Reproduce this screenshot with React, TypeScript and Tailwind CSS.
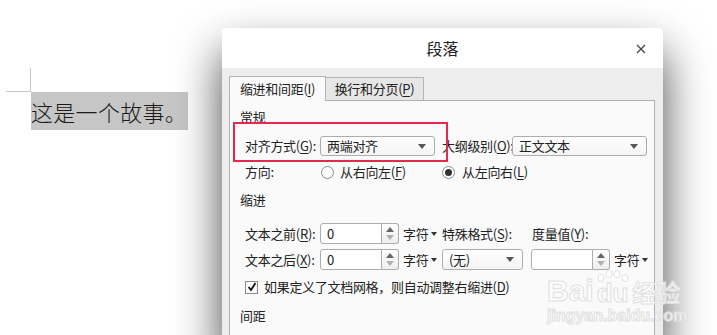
import React from 'react'

const ui = { fontFamily: '"Noto Sans CJK SC", "Noto Sans", sans-serif' }

function Key({ k }: { k: string }) {
  return <span className="underline underline-offset-2">{k}</span>
}

function Arrow() {
  return (
    <svg width="8" height="5" viewBox="0 0 8 5" className="shrink-0">
      <path d="M0 0 L8 0 L4 5 Z" fill="#555" />
    </svg>
  )
}

function Select({ w, text }: { w: string; text: string }) {
  return (
    <div
      className={`${w} shrink-0 h-full flex items-center justify-between pl-[6px] pr-[8px] border border-[#adadad] rounded-[3px] bg-gradient-to-b from-white to-[#f4f4f4] whitespace-nowrap`}
    >
      <span>{text}</span>
      <Arrow />
    </div>
  )
}

function NumberBox({ value }: { value: string }) {
  return (
    <div className="flex h-full shrink-0">
      <div className="w-[62px] h-full flex items-center pl-[6px] border border-[#adadad] rounded-l-[3px] bg-white">
        {value}
      </div>
      <div className="w-[17px] h-full flex flex-col items-center justify-between py-[3px] border border-l-0 border-[#adadad] rounded-r-[3px] bg-gradient-to-b from-white to-[#eeeeee]">
        <svg width="8" height="5" viewBox="0 0 8 5">
          <path d="M0 5 L8 5 L4 0 Z" fill="#666" />
        </svg>
        <svg width="8" height="5" viewBox="0 0 8 5">
          <path d="M0 0 L8 0 L4 5 Z" fill="#b0b0b0" />
        </svg>
      </div>
    </div>
  )
}

function Unit() {
  return (
    <div className="flex items-center gap-[3px] pl-[4px] whitespace-nowrap shrink-0">
      <span>字符</span>
      <svg width="6" height="4" viewBox="0 0 6 4">
        <path d="M0 0 L6 0 L3 4 Z" fill="#333" />
      </svg>
    </div>
  )
}

function Radio({ checked }: { checked?: boolean }) {
  return (
    <div className="w-[13px] h-[13px] rounded-full border border-[#8a8a8a] bg-white flex items-center justify-center shrink-0">
      {checked && <div className="w-[7px] h-[7px] rounded-full bg-[#333]" />}
    </div>
  )
}

export default function App() {
  return (
    <div className="relative w-[717px] h-[335px] overflow-hidden bg-white">
      {/* document text */}
      <div className="pt-[92px] pl-[31px]">
        <div className="relative w-[157px] h-[38px] bg-[#c6c6c6] flex items-center">
          <div className="absolute -left-[1px] -top-[24px] w-px h-[24px] bg-[#c8c8c8]" />
          <div className="absolute -left-[25px] -top-[1px] w-[24px] h-px bg-[#c8c8c8]" />
          <span
            className="text-[22px] text-[#1a1a1a] leading-none font-light tracking-[0.3px]"
            style={{ fontFamily: '"Noto Sans CJK SC", serif' }}
          >
            这是一个故事。
          </span>
        </div>
      </div>

      {/* paragraph dialog */}
      <div
        className="absolute left-[222px] top-[28px] w-[441px] h-[320px] flex flex-col bg-[#ededed] rounded-t-[4px] text-[13px] text-[#222] tracking-[-0.3px] whitespace-nowrap shadow-[0_24px_46px_rgba(0,0,0,0.72)]"
        style={ui}
      >
        <div className="h-[40px] bg-white rounded-t-[4px] relative flex items-center justify-center">
          <span className="text-[16px] text-[#222] tracking-normal">段落</span>
          <svg width="10" height="10" viewBox="0 0 10 10" className="absolute right-[17px] top-[16px]">
            <path d="M1 1 L9 9 M9 1 L1 9" stroke="#444" strokeWidth="1.2" />
          </svg>
        </div>

        <div className="flex-1 pl-[7px] pr-[8px] pt-[7px] flex flex-col">
          <div className="flex items-end h-[25px]">
            <div className="w-[97px] h-[25px] border border-b-0 border-[#b4b4b4] bg-[#fafafa] flex items-center justify-center relative z-10 -mb-px pb-px">
              缩进和间距(<Key k="I" />)
            </div>
            <div className="w-[98px] h-[23px] border border-l-0 border-b-0 border-[#b4b4b4] bg-[#e6e6e6] flex items-center justify-center">
              换行和分页(<Key k="P" />)
            </div>
          </div>

          <div className="relative flex-1 border border-[#b0b0b0] bg-[#fafafa] px-[10px] pt-[7px]">
            <div className="absolute left-[3px] top-[21px] w-[215px] h-[40px] border-2 border-[#e2294f]" />

            <div className="h-[18px] flex items-center">常规</div>

            <div className="mt-[10px] h-[20px] flex items-center pl-[5px]">
              <div className="w-[75px] shrink-0">
                对齐方式(<Key k="G" />):
              </div>
              <Select w="w-[115px]" text="两端对齐" />
              <div className="ml-[7px] w-[70px] shrink-0">
                大纲级别(<Key k="O" />):
              </div>
              <Select w="w-[135px]" text="正文文本" />
            </div>

            <div className="mt-[7px] h-[18px] flex items-center pl-[5px]">
              <div className="w-[75px] shrink-0">方向:</div>
              <div className="w-[122px] shrink-0 flex items-center gap-[6px] pl-[1px]">
                <Radio />
                <span>
                  从右向左(<Key k="F" />)
                </span>
              </div>
              <div className="flex items-center gap-[7px]">
                <Radio checked />
                <span>
                  从左向右(<Key k="L" />)
                </span>
              </div>
            </div>

            <div className="mt-[10px] h-[18px] flex items-center">缩进</div>

            <div className="mt-[14px] h-[21px] flex items-center pl-[5px]">
              <div className="w-[75px] shrink-0">
                文本之前(<Key k="R" />):
              </div>
              <NumberBox value="0" />
              <div className="w-[43px] shrink-0">
                <Unit />
              </div>
              <div className="w-[90px] shrink-0">
                特殊格式(<Key k="S" />):
              </div>
              <div>
                度量值(<Key k="Y" />):
              </div>
            </div>

            <div className="mt-[5px] h-[21px] flex items-center pl-[5px]">
              <div className="w-[75px] shrink-0">
                文本之后(<Key k="X" />):
              </div>
              <NumberBox value="0" />
              <div className="w-[43px] shrink-0">
                <Unit />
              </div>
              <Select w="w-[81px]" text="(无)" />
              <div className="ml-[8px] h-full shrink-0">
                <NumberBox value="" />
              </div>
              <Unit />
            </div>

            <div className="mt-[8px] h-[18px] flex items-center gap-[6px] pl-[5px]">
              <div className="w-[13px] h-[13px] shrink-0 border border-[#8a8a8a] bg-white flex items-center justify-center">
                <svg width="10" height="10" viewBox="0 0 10 10">
                  <path d="M1.5 5 L4 8 L8.5 1" stroke="#111" strokeWidth="1.8" fill="none" />
                </svg>
              </div>
              <span>
                如果定义了文档网格，则自动调整右缩进(<Key k="D" />)
              </span>
            </div>

            <div className="mt-[11px] h-[18px] flex items-center">间距</div>
          </div>
        </div>
      </div>

      {/* watermark */}
      <div
        className="absolute left-[547px] top-[274px] flex flex-col items-start text-white/75 [-webkit-text-stroke:1px_#e0e0e0]"
        style={{ fontFamily: '"Liberation Sans", Arial, sans-serif' }}
      >
        <div className="flex items-end h-[31px] leading-none">
          <span className="text-[30px] font-bold leading-[28px]">Bai</span>
          <span className="relative text-[26px] font-bold leading-[24px] ml-[3px]">
            du
            <svg width="32" height="12" viewBox="0 0 32 12" className="absolute -top-[11px] left-0">
              <ellipse cx="4" cy="8" rx="3" ry="3.5" fill="white" stroke="#e0e0e0" />
              <ellipse cx="12" cy="4" rx="3" ry="3.5" fill="white" stroke="#e0e0e0" />
              <ellipse cx="20" cy="4" rx="3" ry="3.5" fill="white" stroke="#e0e0e0" />
              <ellipse cx="28" cy="8" rx="3" ry="3.5" fill="white" stroke="#e0e0e0" />
            </svg>
          </span>
          <span className="text-[24px] font-bold leading-[26px] ml-[4px]" style={ui}>
            经验
          </span>
        </div>
        <span className="text-[16px] font-bold leading-[16px] mt-[3px]">jingyan.baidu.com</span>
      </div>
    </div>
  )
}
